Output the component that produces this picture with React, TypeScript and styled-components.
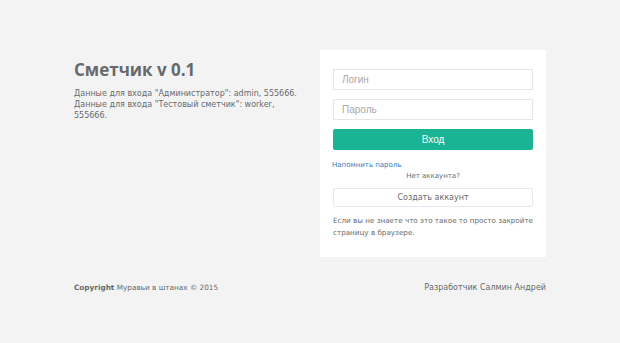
import styled, {createGlobalStyle} from "styled-components";

const GlobalStyle = createGlobalStyle`
  html, body {
    margin: 0;
    padding: 0;
    background: #f3f3f4;
  }
  body {
    font-family: "DejaVu Sans", "Open Sans", sans-serif;
    color: #676a6c;
  }
`;

function App() {
    return (
        <>
            <GlobalStyle/>
            <Page>
                <Row>
                    <Intro>
                        <Title>Сметчик v 0.1</Title>
                        <Info>Данные для входа "Администратор": admin, 555666.</Info>
                        <Info>Данные для входа "Тестовый сметчик": worker, 555666.</Info>
                    </Intro>
                    <Card>
                        <Input placeholder="Логин"/>
                        <Input type="password" placeholder="Пароль"/>
                        <PrimaryButton type="button">Вход</PrimaryButton>
                        <Link href="#">Напомнить пароль</Link>
                        <Muted>Нет аккаунта?</Muted>
                        <WhiteButton type="button">Создать аккаунт</WhiteButton>
                        <Note>Если вы не знаете что это такое то просто закройте страницу в браузере.</Note>
                    </Card>
                </Row>
                <Footer>
                    <FooterText size={7.3}><b>Copyright</b> Муравьи в штанах © 2015</FooterText>
                    <FooterText size={8}>Разработчик Салмин Андрей</FooterText>
                </Footer>
            </Page>
        </>
    );
}

/* CSS */

const Page = styled.div`
  width: 472px;
  margin: 0 auto;
  padding-top: 50px;
`;

const Row = styled.div`
  display: flex;
  justify-content: space-between;
  align-items: flex-start;
`;

const Intro = styled.div`
  width: 228px;
  padding-top: 9px;
`;

const Title = styled.h2`
  margin: 0 0 7px;
  font-family: "Open Sans", sans-serif;
  font-size: 17px;
  font-weight: 700;
  line-height: 22px;
  color: #676a6c;
`;

const Info = styled.p`
  margin: 0;
  font-size: 8px;
  line-height: 11px;
`;

const Card = styled.div`
  width: 226px;
  box-sizing: border-box;
  background: #fff;
  padding: 19px 13px 18px;
  display: flex;
  flex-direction: column;
`;

const Input = styled.input`
  height: 21px;
  box-sizing: border-box;
  border: 1px solid #e5e6e7;
  padding: 0 8px;
  margin-bottom: 9px;
  font-family: "Liberation Sans", Arial, sans-serif;
  font-size: 10px;
  color: #676a6c;
  outline: none;

  &::placeholder {
    color: #a9a9a9;
  }
`;

const PrimaryButton = styled.button`
  height: 21px;
  border: none;
  border-radius: 2px;
  background: #1ab394;
  color: #f4fbf9;
  font-family: "Liberation Sans", Arial, sans-serif;
  font-size: 10px;
  margin-bottom: 10px;
`;

const Link = styled.a`
  margin-left: -1px;
  font-size: 7px;
  line-height: 11px;
  color: #337ab7;
  text-decoration: none;
`;

const Muted = styled.p`
  margin: 0 0 6px;
  text-align: center;
  font-size: 7px;
  line-height: 11px;
  color: #676a6c;
`;

const WhiteButton = styled.button`
  height: 19px;
  border: 1px solid #e7eaec;
  border-radius: 2px;
  background: #fff;
  color: #676a6c;
  font-family: "DejaVu Sans", sans-serif;
  font-size: 8px;
  margin-bottom: 8px;
`;

const Note = styled.p`
  margin: 0;
  font-size: 7.2px;
  line-height: 12px;
`;

const Footer = styled.div`
  display: flex;
  justify-content: space-between;
  align-items: baseline;
  margin-top: 25px;
  line-height: 12px;
`;

const FooterText = styled.span<{ size: number }>`
  font-size: ${p => p.size}px;
`;

/* CSS */

export default App;
